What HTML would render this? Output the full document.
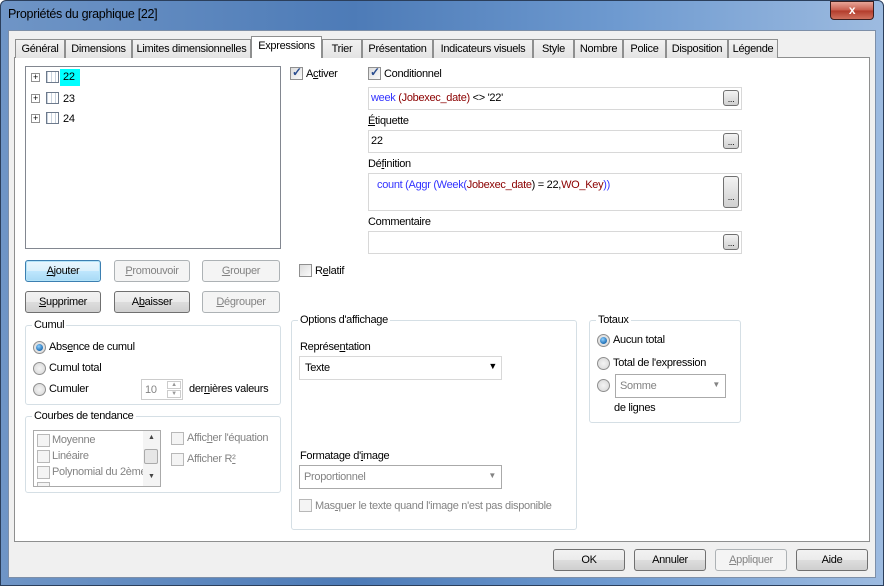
<!DOCTYPE html>
<html><head><meta charset="utf-8">
<style>
*{box-sizing:border-box;margin:0;padding:0}
body{width:884px;height:586px;overflow:hidden;font-family:"Liberation Sans",sans-serif;font-size:11px;color:#000;background:#fff;position:relative;letter-spacing:-0.3px}
.a{position:absolute;white-space:nowrap;margin-top:1px}
.frame{position:absolute;left:0;top:0;width:884px;height:586px;background:linear-gradient(90deg,#6f95c6 0%,#4d7bb7 40%,#6e9ad0 70%,#9dbbe0 100%);border:1px solid #2b3f5c;border-radius:6px 6px 0 0}
.client{position:absolute;left:8px;top:30px;width:868px;height:548px;background:#f0f0f0;border:1px solid #7d8fa8}
.panel{position:absolute;left:14px;top:57px;width:856px;height:485px;background:#fff;border:1px solid #8e8f8f}
.tab{position:absolute;top:39px;height:19px;background:linear-gradient(#f2f2f2,#e3e3e3);border:1px solid #8e8f8f;border-bottom:none;text-align:center;line-height:18px;white-space:nowrap}
.tab.on{top:36px;height:22px;background:#fff;line-height:19px;z-index:2}
.btn{position:absolute;height:22px;border:1px solid #707070;border-radius:3px;background:linear-gradient(#f2f2f2 0,#ebebeb 50%,#dddddd 51%,#cfcfcf 100%);text-align:center;line-height:21px;white-space:nowrap}
.btn.dis{border-color:#adb2b5;background:#f4f4f4;color:#838383}
.box{position:absolute;border:1px solid #abadb3;background:#fff}
.grp{position:absolute;border:1px solid #d5dfe5;border-radius:3px}
.grp>span{position:absolute;top:-7px;left:6px;background:#fff;padding:0 2px}
.rad{position:absolute;width:13px;height:13px;border-radius:50%;border:1px solid #8f8f8f;background:radial-gradient(#f4f4f4,#d5d5d5)}
.rad.on::after{content:"";position:absolute;left:2px;top:2px;width:7px;height:7px;border-radius:50%;background:radial-gradient(circle at 40% 35%,#8fd0ff,#1f6fb5 70%,#0c3f75)}
.chk{position:absolute;width:13px;height:13px;border:1px solid #8f8f8f;background:linear-gradient(135deg,#dcdcdc,#fbfbfb)}
.chk.on::after{content:"✓";position:absolute;left:1px;top:-3px;font-size:12px;color:#2a4d8f;font-weight:bold}
.chk.dis{border-color:#b8b8b8;background:#f4f4f4}
.dots{position:absolute;width:16px;height:16px;border:1px solid #707070;border-radius:3px;background:linear-gradient(#f3f3f3,#d0d0d0);font-size:9px;text-align:center;line-height:16px}
.g{color:#838383}
.bl{color:#3333ff}.rd{color:#8b0000}
u{text-decoration:underline}
.plus{position:absolute;width:9px;height:9px;border:1px solid #919191;background:#fff;font-size:9px;line-height:7px;text-align:center}
.tico{position:absolute;width:13px;height:12px;border:1px solid #6d7a8c;background:repeating-linear-gradient(90deg,#c9d3df 0 1px,#fff 1px 4px),#fff}
</style></head><body>
<div class="frame"></div>
<div class="a" style="left:8px;top:6px;font-size:12.5px;color:#000">Propriétés du graphique [22]</div>
<div class="a" style="left:830px;top:0px;width:44px;height:19px;border:1px solid #3b1e1e;border-radius:0 0 4px 4px;background:linear-gradient(#e8a598,#c75b4b 50%,#b23b2a 51%,#d0715e);color:#fff;text-align:center;font-weight:bold;font-size:12px;line-height:17px">x</div>
<div class="client"></div>
<div class="panel"></div>
<div class="tab" style="left:15px;width:50px">Général</div>
<div class="tab" style="left:65px;width:67px">Dimensions</div>
<div class="tab" style="left:132px;width:119px">Limites dimensionnelles</div>
<div class="tab on" style="left:251px;width:71px">Expressions</div>
<div class="tab" style="left:322px;width:40px">Trier</div>
<div class="tab" style="left:362px;width:71px">Présentation</div>
<div class="tab" style="left:433px;width:100px">Indicateurs visuels</div>
<div class="tab" style="left:533px;width:41px">Style</div>
<div class="tab" style="left:574px;width:49px">Nombre</div>
<div class="tab" style="left:623px;width:43px">Police</div>
<div class="tab" style="left:666px;width:62px">Disposition</div>
<div class="tab" style="left:728px;width:50px">Légende</div>

<div class="box" style="left:25px;top:66px;width:256px;height:183px;border-color:#828790"></div>
<div class="plus" style="left:31px;top:73px">+</div><div class="tico" style="left:46px;top:71px"></div>
<div class="a" style="left:60px;top:68px;width:20px;height:17px;background:#00ffff;padding-left:3px;line-height:17px">22</div>
<div class="plus" style="left:31px;top:94px">+</div><div class="tico" style="left:46px;top:92px"></div><div class="a" style="left:63px;top:92px">23</div>
<div class="plus" style="left:31px;top:114px">+</div><div class="tico" style="left:46px;top:112px"></div><div class="a" style="left:63px;top:112px">24</div>

<div class="btn" style="left:25px;top:260px;width:76px;border-color:#3c7fb1;box-shadow:inset 0 0 0 1px #b5e4f8;background:linear-gradient(#eaf6fd,#d9f0fc 50%,#bee6fd 51%,#a7d9f5)"><u>A</u>jouter</div>
<div class="btn dis" style="left:114px;top:260px;width:76px"><u>P</u>romouvoir</div>
<div class="btn dis" style="left:202px;top:260px;width:78px"><u>G</u>rouper</div>
<div class="btn" style="left:25px;top:291px;width:76px"><u>S</u>upprimer</div>
<div class="btn" style="left:114px;top:291px;width:76px">A<u>b</u>aisser</div>
<div class="btn dis" style="left:202px;top:291px;width:78px"><u>D</u>égrouper</div>

<div class="grp" style="left:25px;top:325px;width:256px;height:80px"><span>Cumul</span></div>
<div class="rad on" style="left:33px;top:341px"></div><div class="a" style="left:49px;top:340px">Abs<u>e</u>nce de cumul</div>
<div class="rad" style="left:33px;top:362px"></div><div class="a" style="left:49px;top:361px">Cumul total</div>
<div class="rad" style="left:33px;top:383px"></div><div class="a" style="left:49px;top:382px">Cumuler</div>
<div class="box" style="left:141px;top:379px;width:42px;height:21px;border-color:#ccc"><span class="g" style="position:absolute;left:3px;top:4px">10</span>
<div style="position:absolute;right:1px;top:1px;width:14px;height:8px;border:1px solid #ccc;font-size:6px;color:#999;text-align:center;line-height:6px">▲</div>
<div style="position:absolute;right:1px;top:10px;width:14px;height:8px;border:1px solid #ccc;font-size:6px;color:#999;text-align:center;line-height:6px">▼</div></div>
<div class="a" style="left:189px;top:382px">der<u>n</u>ières valeurs</div>

<div class="grp" style="left:25px;top:416px;width:256px;height:77px"><span>Courbes de tendance</span></div>
<div class="box" style="left:33px;top:430px;width:128px;height:57px;border-color:#aaa;overflow:hidden">
<div class="chk dis" style="left:3px;top:3px"></div><div class="a g" style="left:18px;top:2px">Moyenne</div>
<div class="chk dis" style="left:3px;top:19px"></div><div class="a g" style="left:18px;top:18px">Linéaire</div>
<div class="chk dis" style="left:3px;top:35px"></div><div class="a g" style="left:18px;top:34px">Polynomial du 2ème</div>
<div class="chk dis" style="left:3px;top:51px"></div>
<div style="position:absolute;right:0;top:0;width:17px;height:55px;background:#f4f4f4"><div style="position:absolute;top:3px;left:5px;font-size:7px;color:#444">▲</div><div style="position:absolute;top:18px;left:1px;width:14px;height:15px;border:1px solid #aaa;border-radius:2px;background:#e6e6e6"></div><div style="position:absolute;top:42px;left:5px;font-size:7px;color:#444">▼</div></div>
</div>
<div class="chk dis" style="left:171px;top:432px"></div><div class="a g" style="left:187px;top:431px">Affic<u>h</u>er l'équation</div>
<div class="chk dis" style="left:171px;top:453px"></div><div class="a g" style="left:187px;top:452px">Afficher R<u>²</u></div>

<div class="chk on" style="left:290px;top:67px"></div><div class="a" style="left:306px;top:67px">A<u>c</u>tiver</div>
<div class="chk on" style="left:368px;top:67px"></div><div class="a" style="left:384px;top:67px">Conditionnel</div>
<div class="box" style="left:368px;top:87px;width:374px;height:23px;border-color:#d8d8d8"><span style="position:absolute;left:2px;top:4px"><span class="bl">week</span> <span class="rd">(Jobexec_date)</span> &lt;&gt; '22'</span></div>
<div class="dots" style="left:723px;top:90px">...</div>
<div class="a" style="left:368px;top:114px"><u>É</u>tiquette</div>
<div class="box" style="left:368px;top:130px;width:374px;height:23px;border-color:#d8d8d8"><span style="position:absolute;left:2px;top:4px">22</span></div>
<div class="dots" style="left:723px;top:133px">...</div>
<div class="a" style="left:368px;top:157px">Dé<u>f</u>inition</div>
<div class="box" style="left:368px;top:173px;width:374px;height:38px;border-color:#d8d8d8"><span style="position:absolute;left:8px;top:5px"><span class="bl">count (Aggr (Week(</span><span class="rd">Jobexec_date</span>) = 22,<span class="rd">WO_Key</span><span class="bl">))</span></span></div>
<div class="dots" style="left:723px;top:176px;height:32px;line-height:40px">...</div>
<div class="a" style="left:368px;top:215px">Commentaire</div>
<div class="box" style="left:368px;top:231px;width:374px;height:23px;border-color:#d8d8d8"></div>
<div class="dots" style="left:723px;top:234px">...</div>
<div class="chk" style="left:299px;top:264px"></div><div class="a" style="left:315px;top:264px">R<u>e</u>latif</div>

<div class="grp" style="left:291px;top:320px;width:286px;height:210px"><span>Options d'affichage</span></div>
<div class="a" style="left:300px;top:340px">Représe<u>n</u>tation</div>
<div class="box" style="left:299px;top:356px;width:203px;height:24px;border-color:#d8d8d8"><span style="position:absolute;left:5px;top:5px">Texte</span><span style="position:absolute;right:4px;top:4px;font-size:9px">▼</span></div>
<div class="a" style="left:300px;top:449px">Formatage d'<u>i</u>mage</div>
<div class="box" style="left:299px;top:465px;width:203px;height:24px;border-color:#aaa"><span class="g" style="position:absolute;left:4px;top:5px">Proportionnel</span><span class="g" style="position:absolute;right:5px;top:5px;font-size:8px">▼</span></div>
<div class="chk dis" style="left:299px;top:499px"></div><div class="a g" style="left:315px;top:499px">Mas<u>q</u>uer le texte quand l'image n'est pas disponible</div>

<div class="grp" style="left:589px;top:320px;width:152px;height:103px"><span>Totaux</span></div>
<div class="rad on" style="left:597px;top:334px"></div><div class="a" style="left:613px;top:333px">Aucun total</div>
<div class="rad" style="left:597px;top:357px"></div><div class="a" style="left:613px;top:356px">Total de l'expression</div>
<div class="rad" style="left:597px;top:379px"></div>
<div class="box" style="left:615px;top:374px;width:111px;height:24px;border-color:#aaa"><span class="g" style="position:absolute;left:4px;top:5px">Somme</span><span class="g" style="position:absolute;right:5px;top:5px;font-size:8px">▼</span></div>
<div class="a" style="left:614px;top:401px">de lignes</div>

<div class="btn" style="left:553px;top:549px;width:72px">OK</div>
<div class="btn" style="left:634px;top:549px;width:72px">Annuler</div>
<div class="btn dis" style="left:715px;top:549px;width:72px"><u>A</u>ppliquer</div>
<div class="btn" style="left:796px;top:549px;width:72px">Aide</div>
</body></html>
